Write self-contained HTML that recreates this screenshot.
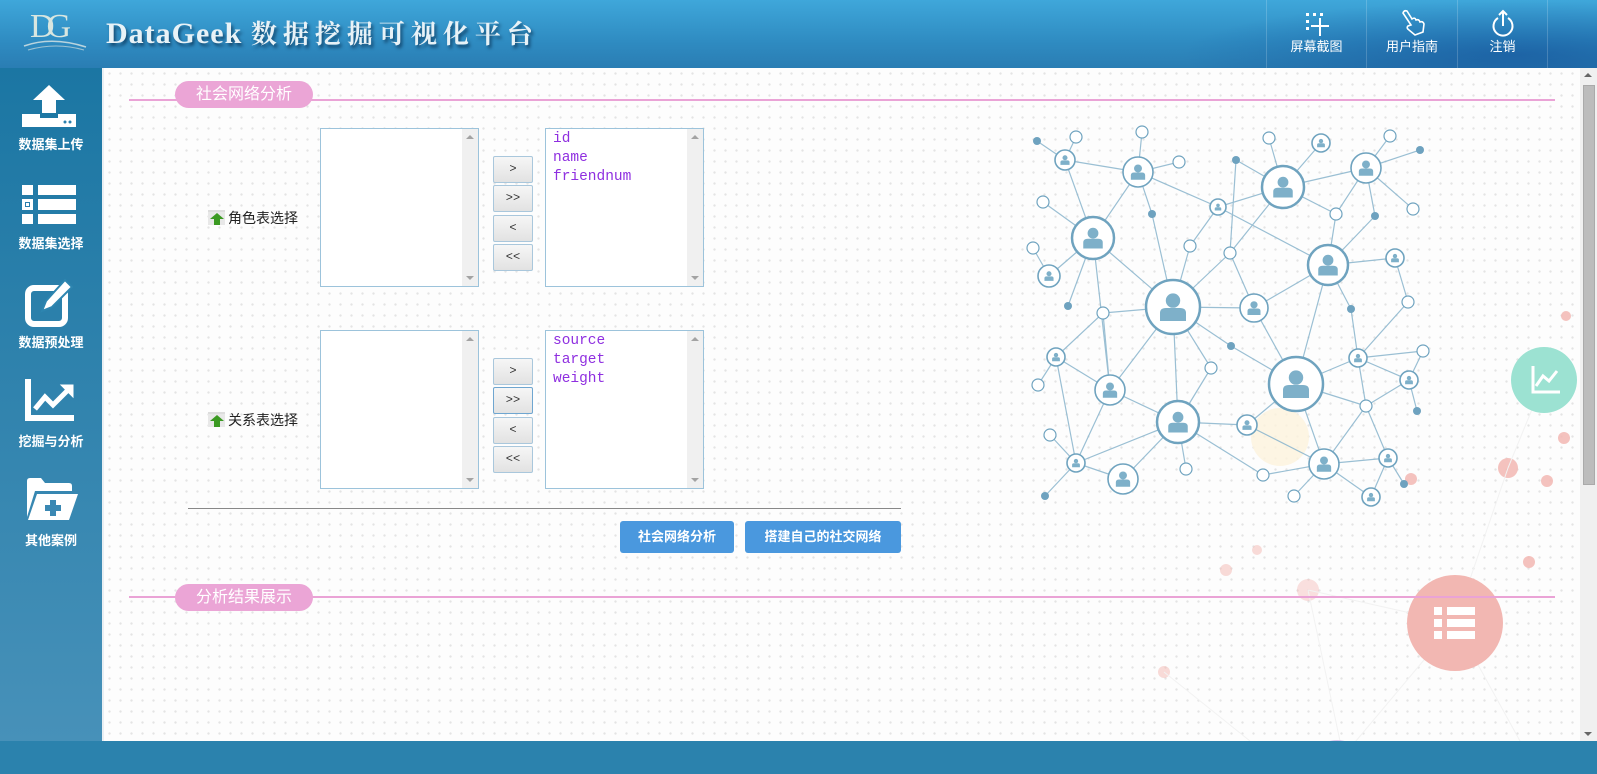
<!DOCTYPE html>
<html><head><meta charset="utf-8"><style>
*{margin:0;padding:0;box-sizing:border-box}
body{width:1597px;height:774px;overflow:hidden;position:relative;font-family:"Liberation Sans","Noto Sans CJK SC",sans-serif;background:#fff}
#hdr{position:absolute;left:0;top:0;width:1597px;height:68px;background:linear-gradient(180deg,#3fa7da 0%,#2f8cc2 60%,#2a7db3 100%)}
#hdr .rt{position:absolute;right:0;top:0;width:420px;height:68px;background:radial-gradient(ellipse at 80% 80%,rgba(10,60,140,.45),rgba(0,0,0,0) 70%)}
.title{position:absolute;left:106px;top:14px;font-family:"Liberation Serif","Noto Serif CJK SC",serif;font-weight:bold;font-size:30px;color:#e8f2f7;text-shadow:2px 3px 3px rgba(0,30,60,.6);letter-spacing:1px;white-space:nowrap}
.title span{letter-spacing:6px;font-size:26px}
.logo{position:absolute;left:30px;top:8px;font-family:"Liberation Serif",serif;font-size:34px;color:#d8e6e0;letter-spacing:-8px}
.nav{position:absolute;top:0;height:68px;border-left:1px solid rgba(255,255,255,.18);color:#fff;font-size:13px;text-align:center}
.nav div{position:absolute;bottom:13px;width:100%}
#side{position:absolute;left:0;top:68px;width:104px;height:673px;background:linear-gradient(180deg,#1b76a3,#4791b9);border-right:2px solid #e9eff3}
.si{position:absolute;left:0;width:102px;text-align:center;color:#fff;font-size:13px;font-weight:bold}
#main{position:absolute;left:104px;top:68px;width:1476px;height:673px;background-color:#fdfdfd;background-image:radial-gradient(circle,#e4e4e4 1px,transparent 1.4px);background-size:11px 11px}
#foot{position:absolute;left:0;top:741px;width:1597px;height:33px;background:#2b82ad}
#sb{position:absolute;left:1580px;top:68px;width:17px;height:673px;background:#f0f0f0}
.pill{position:absolute;height:27px;border-radius:14px;background:#eba5d6;color:#fff;font-size:16px;line-height:27px;padding:0 21px}
.hl{position:absolute;height:2px;background:#eaa3d6}
.lb{position:absolute;width:159px;height:159px;border:1px solid #9cc3db;background:#fff}
.lb .sc{position:absolute;right:0;top:0;width:16px;height:100%;background:#f0f0f0}
.lb .sc:before{content:"";position:absolute;left:4px;top:6px;border:4px solid transparent;border-bottom:4px solid #a3a3a3;border-top:0}
.lb .sc:after{content:"";position:absolute;left:4px;bottom:6px;border:4px solid transparent;border-top:4px solid #a3a3a3;border-bottom:0}
.lb pre{font-family:"Liberation Mono",monospace;color:#8f2fe0;font-size:14.5px;line-height:19px;padding:1px 7px}
.bt{position:absolute;left:493px;width:40px;height:27px;border:1px solid #a9c7dc;border-radius:2px;background:linear-gradient(#f6f6f6,#e2e2e2);font-family:"Liberation Mono",monospace;font-size:12px;color:#333;text-align:center;line-height:25px}
.lab{position:absolute;left:208px;font-size:14px;color:#222}
.lab i{display:inline-block;width:17px;height:15px;vertical-align:-2px;margin-right:3px;background:linear-gradient(#ddd 0 2px,transparent 2px),#e8e8e8;position:relative}
.lab i:after{content:"";position:absolute;left:2px;top:3px;width:0;height:0;border:7px solid transparent;border-bottom:6px solid #3b9a22;border-top:0}
.lab i:before{content:"";position:absolute;left:6px;top:8px;width:6px;height:7px;background:#3b9a22}
.btn{position:absolute;top:521px;height:32px;background:#4a98de;border-radius:3px;color:#fff;font-weight:bold;font-size:13px;line-height:32px;text-align:center}
</style></head><body>
<div id="hdr"><div class="rt"></div>
<div class="logo">DG</div>
<svg style="position:absolute;left:22px;top:38px" width="66" height="14"><path d="M2 8 Q30 -2 64 9" stroke="#b9d4de" stroke-width="1.5" fill="none"/><path d="M6 12 Q34 4 62 12" stroke="#9cc2d2" stroke-width="1" fill="none"/></svg>
<div class="title">DataGeek <span>数据挖掘可视化平台</span></div>
<div class="nav" style="left:1266px;width:100px"><svg style="position:absolute;left:37px;top:11px" width="30" height="26"><g fill="#fff"><rect x="2" y="2" width="3" height="3"/><rect x="9" y="2" width="3" height="3"/><rect x="16" y="2" width="3" height="3"/><rect x="2" y="9" width="3" height="3"/><rect x="2" y="16" width="3" height="3"/><rect x="15" y="7" width="2" height="18"/><rect x="7" y="14" width="18" height="2"/></g></svg><div>屏幕截图</div></div>
<div class="nav" style="left:1366px;width:91px"><svg style="position:absolute;left:32px;top:9px" width="28" height="28" fill="none" stroke="#fff" stroke-width="1.6"><path d="M4 4 L12 16 L9 17 Q7 19 10 21 L16 26 L24 23 L25 15 Q24 12 21 13 Q20 10 17 11 Q16 8 13 10 L8 2 Q5 1 4 4Z"/></svg><div>用户指南</div></div>
<div class="nav" style="left:1457px;width:90px"><svg style="position:absolute;left:31px;top:8px" width="28" height="30" fill="none" stroke="#fff" stroke-width="2"><path d="M9 10 A9.5 9.5 0 1 0 19 10"/><path d="M14 18 V3 M10 7 L14 3 L18 7"/></svg><div>注销</div></div>
<div class="nav" style="left:1547px;width:50px"></div>
</div>
<div id="side">
<svg style="position:absolute;left:22px;top:17px" width="56" height="44" fill="#fff"><path d="M27 0 L43 15 H34 V28 H20 V15 H11Z"/><path d="M0 29 H18 V33 H36 V29 H54 V42 H0Z"/><circle cx="43" cy="37" r="1.5" fill="#2a7fad"/><circle cx="48" cy="37" r="1.5" fill="#2a7fad"/></svg>
<div class="si" style="top:66px">数据集上传</div>
<svg style="position:absolute;left:22px;top:117px" width="56" height="40" fill="#fff"><rect x="0" y="0" width="11" height="10"/><rect x="16" y="0" width="38" height="10"/><rect x="0" y="14" width="11" height="11"/><rect x="3" y="17" width="5" height="5" fill="#2a7fad"/><rect x="4" y="18" width="3" height="3"/><rect x="16" y="14" width="38" height="11"/><rect x="0" y="29" width="11" height="10"/><rect x="16" y="29" width="38" height="10"/></svg>
<div class="si" style="top:165px">数据集选择</div>
<svg style="position:absolute;left:25px;top:210px" width="52" height="50"><rect x="3" y="10" width="37" height="36" rx="6" fill="none" stroke="#fff" stroke-width="6"/><path d="M40 2 L47 9 L27 29 L17 33 L21 23Z" fill="#fff" stroke="#2d85b0" stroke-width="2"/></svg>
<div class="si" style="top:264px">数据预处理</div>
<svg style="position:absolute;left:25px;top:311px" width="50" height="45" fill="none" stroke="#fff" stroke-width="6"><path d="M3 0 V39 H49"/><path d="M10 30 L20 18 L28 26 L44 10" stroke-width="5"/><path d="M36 6 H48 V18Z" fill="#fff" stroke-width="1"/></svg>
<div class="si" style="top:363px">挖掘与分析</div>
<svg style="position:absolute;left:25px;top:409px" width="54" height="44" fill="#fff"><path d="M2 4 Q2 1 5 1 H16 L20 6 H44 Q47 6 47 9 V14 H10 L2 40Z"/><path d="M12 17 H53 L44 43 H3Z"/><path d="M25 23 H31 V28 H36 V34 H31 V39 H25 V34 H20 V28 H25Z" fill="#3a88b3"/></svg>
<div class="si" style="top:462px">其他案例</div>
</div>
<div id="main"></div>
<svg style="position:absolute;left:0;top:0" width="1597" height="774">
<defs><symbol id="p" viewBox="-10 -10 20 20"><circle cx="0" cy="-3.2" r="3.6" fill="#7eb0c9"/><path d="M-6.5 7 V3 Q-6.5 0.5 -3.5 0.5 H3.5 Q6.5 0.5 6.5 3 V7Z" fill="#7eb0c9"/></symbol></defs>
<g fill="#f3b8b3" opacity=".85"><circle cx="1566" cy="316" r="5"/><circle cx="1564" cy="438" r="6"/><circle cx="1508" cy="468" r="10"/><circle cx="1547" cy="481" r="6"/><circle cx="1529" cy="562" r="6"/><circle cx="1257" cy="550" r="5" opacity=".6"/><circle cx="1226" cy="570" r="6" opacity=".6"/><circle cx="1308" cy="590" r="11" opacity=".5"/><circle cx="1164" cy="672" r="6" opacity=".6"/><circle cx="1411" cy="479" r="6"/></g>
<g stroke="#f2f2f2" stroke-width="1"><line x1="1455" y1="623" x2="1308" y2="590"/><line x1="1455" y1="623" x2="1508" y2="468"/><line x1="1455" y1="623" x2="1340" y2="760"/><line x1="1455" y1="623" x2="1520" y2="741"/><line x1="1308" y1="590" x2="1340" y2="741"/><line x1="1508" y1="468" x2="1544" y2="380"/><line x1="1164" y1="672" x2="1250" y2="741"/></g>
<circle cx="1280" cy="437" r="29" fill="#fdf3dc" opacity=".8"/>
<circle cx="1544" cy="380" r="33" fill="#9ce2d2"/>
<path d="M1533 366 V392 H1560 M1536 386 L1543 376 L1549 381 L1557 371" stroke="#fff" stroke-width="3" fill="none"/>
<circle cx="1455" cy="623" r="48" fill="#f2b7b2"/>
<g fill="#fff"><rect x="1434" y="607" width="8" height="8"/><rect x="1447" y="607" width="28" height="8"/><rect x="1434" y="619" width="8" height="8"/><rect x="1447" y="619" width="28" height="8"/><rect x="1434" y="631" width="8" height="8"/><rect x="1447" y="631" width="28" height="8"/></g>
<circle cx="1337" cy="770" r="30" fill="#d9c6ec"/>
<g stroke="#8fb8cf" stroke-width="1.2" opacity=".9">
<line x1="1093" y1="238" x2="1065" y2="160"/><line x1="1093" y1="238" x2="1138" y2="172"/><line x1="1093" y1="238" x2="1173" y2="307"/><line x1="1093" y1="238" x2="1110" y2="390"/><line x1="1093" y1="238" x2="1043" y2="202"/><line x1="1093" y1="238" x2="1068" y2="306"/><line x1="1093" y1="238" x2="1049" y2="276"/>
<line x1="1065" y1="160" x2="1037" y2="141"/><line x1="1065" y1="160" x2="1076" y2="137"/><line x1="1065" y1="160" x2="1138" y2="172"/>
<line x1="1138" y1="172" x2="1142" y2="132"/><line x1="1138" y1="172" x2="1179" y2="162"/><line x1="1138" y1="172" x2="1152" y2="214"/><line x1="1138" y1="172" x2="1218" y2="207"/>
<line x1="1173" y1="307" x2="1152" y2="214"/><line x1="1173" y1="307" x2="1103" y2="313"/><line x1="1173" y1="307" x2="1110" y2="390"/><line x1="1173" y1="307" x2="1190" y2="246"/><line x1="1173" y1="307" x2="1230" y2="253"/><line x1="1173" y1="307" x2="1254" y2="308"/><line x1="1173" y1="307" x2="1178" y2="422"/><line x1="1173" y1="307" x2="1231" y2="346"/><line x1="1173" y1="307" x2="1211" y2="368"/>
<line x1="1110" y1="390" x2="1056" y2="357"/><line x1="1110" y1="390" x2="1178" y2="422"/><line x1="1110" y1="390" x2="1103" y2="313"/><line x1="1110" y1="390" x2="1076" y2="463"/>
<line x1="1283" y1="187" x2="1218" y2="207"/><line x1="1283" y1="187" x2="1321" y2="143"/><line x1="1283" y1="187" x2="1366" y2="168"/><line x1="1283" y1="187" x2="1336" y2="214"/><line x1="1283" y1="187" x2="1236" y2="160"/><line x1="1283" y1="187" x2="1230" y2="253"/><line x1="1283" y1="187" x2="1269" y2="138"/>
<line x1="1366" y1="168" x2="1390" y2="136"/><line x1="1366" y1="168" x2="1336" y2="214"/><line x1="1366" y1="168" x2="1413" y2="209"/><line x1="1366" y1="168" x2="1375" y2="216"/><line x1="1366" y1="168" x2="1420" y2="150"/>
<line x1="1328" y1="265" x2="1336" y2="214"/><line x1="1328" y1="265" x2="1254" y2="308"/><line x1="1328" y1="265" x2="1375" y2="216"/><line x1="1328" y1="265" x2="1395" y2="258"/><line x1="1328" y1="265" x2="1351" y2="309"/><line x1="1328" y1="265" x2="1296" y2="384"/><line x1="1328" y1="265" x2="1218" y2="207"/>
<line x1="1296" y1="384" x2="1231" y2="346"/><line x1="1296" y1="384" x2="1247" y2="425"/><line x1="1296" y1="384" x2="1358" y2="358"/><line x1="1296" y1="384" x2="1366" y2="406"/><line x1="1296" y1="384" x2="1254" y2="308"/><line x1="1296" y1="384" x2="1324" y2="464"/>
<line x1="1358" y1="358" x2="1351" y2="309"/><line x1="1358" y1="358" x2="1408" y2="302"/><line x1="1358" y1="358" x2="1409" y2="380"/><line x1="1358" y1="358" x2="1423" y2="351"/><line x1="1358" y1="358" x2="1366" y2="406"/><line x1="1395" y1="258" x2="1408" y2="302"/>
<line x1="1409" y1="380" x2="1417" y2="411"/><line x1="1409" y1="380" x2="1423" y2="351"/><line x1="1409" y1="380" x2="1366" y2="406"/>
<line x1="1178" y1="422" x2="1247" y2="425"/><line x1="1178" y1="422" x2="1123" y2="479"/><line x1="1178" y1="422" x2="1076" y2="463"/><line x1="1178" y1="422" x2="1186" y2="469"/><line x1="1178" y1="422" x2="1263" y2="475"/><line x1="1211" y1="368" x2="1178" y2="422"/>
<line x1="1324" y1="464" x2="1247" y2="425"/><line x1="1324" y1="464" x2="1263" y2="475"/><line x1="1324" y1="464" x2="1366" y2="406"/><line x1="1324" y1="464" x2="1388" y2="458"/><line x1="1324" y1="464" x2="1371" y2="497"/><line x1="1324" y1="464" x2="1294" y2="496"/>
<line x1="1388" y1="458" x2="1404" y2="484"/><line x1="1388" y1="458" x2="1366" y2="406"/><line x1="1388" y1="458" x2="1371" y2="497"/>
<line x1="1076" y1="463" x2="1050" y2="435"/><line x1="1076" y1="463" x2="1045" y2="496"/><line x1="1076" y1="463" x2="1056" y2="357"/><line x1="1076" y1="463" x2="1123" y2="479"/>
<line x1="1049" y1="276" x2="1033" y2="248"/><line x1="1056" y1="357" x2="1038" y2="385"/><line x1="1056" y1="357" x2="1103" y2="313"/><line x1="1230" y1="253" x2="1254" y2="308"/><line x1="1190" y1="246" x2="1218" y2="207"/><line x1="1230" y1="253" x2="1236" y2="160"/>
</g>
<g fill="#6ea2bf"><circle cx="1037" cy="141" r="4"/><circle cx="1152" cy="214" r="4"/><circle cx="1068" cy="306" r="4"/><circle cx="1231" cy="346" r="4"/><circle cx="1375" cy="216" r="4"/><circle cx="1351" cy="309" r="4"/><circle cx="1236" cy="160" r="4"/><circle cx="1045" cy="496" r="4"/><circle cx="1404" cy="484" r="4"/><circle cx="1417" cy="411" r="4"/><circle cx="1420" cy="150" r="4"/></g>
<g fill="#fff" stroke="#6fa3bf">
<g stroke-width="2.5"><circle cx="1093" cy="238" r="21"/><circle cx="1173" cy="307" r="27"/><circle cx="1283" cy="187" r="21"/><circle cx="1328" cy="265" r="20"/><circle cx="1296" cy="384" r="27"/><circle cx="1178" cy="422" r="21"/></g>
<g stroke-width="1.6"><circle cx="1138" cy="172" r="15"/><circle cx="1366" cy="168" r="15"/><circle cx="1254" cy="308" r="14"/><circle cx="1110" cy="390" r="15"/><circle cx="1123" cy="479" r="15"/><circle cx="1324" cy="464" r="15"/><circle cx="1065" cy="160" r="10"/><circle cx="1049" cy="276" r="11"/><circle cx="1056" cy="357" r="9"/><circle cx="1076" cy="463" r="9"/><circle cx="1247" cy="425" r="10"/><circle cx="1395" cy="258" r="9"/><circle cx="1358" cy="358" r="9"/><circle cx="1409" cy="380" r="9"/><circle cx="1388" cy="458" r="9"/><circle cx="1371" cy="497" r="9"/><circle cx="1321" cy="143" r="9"/><circle cx="1218" cy="207" r="8"/></g>
<g stroke-width="1.2"><circle cx="1076" cy="137" r="6"/><circle cx="1142" cy="132" r="6"/><circle cx="1179" cy="162" r="6"/><circle cx="1043" cy="202" r="6"/><circle cx="1033" cy="248" r="6"/><circle cx="1190" cy="246" r="6"/><circle cx="1230" cy="253" r="6"/><circle cx="1103" cy="313" r="6"/><circle cx="1211" cy="368" r="6"/><circle cx="1336" cy="214" r="6"/><circle cx="1366" cy="406" r="6"/><circle cx="1408" cy="302" r="6"/><circle cx="1413" cy="209" r="6"/><circle cx="1269" cy="138" r="6"/><circle cx="1390" cy="136" r="6"/><circle cx="1038" cy="385" r="6"/><circle cx="1050" cy="435" r="6"/><circle cx="1186" cy="469" r="6"/><circle cx="1263" cy="475" r="6"/><circle cx="1294" cy="496" r="6"/><circle cx="1423" cy="351" r="6"/></g>
</g>
<g>
<use href="#p" x="1078" y="223" width="30" height="30"/><use href="#p" x="1153" y="287" width="40" height="40"/><use href="#p" x="1268" y="172" width="30" height="30"/><use href="#p" x="1313" y="250" width="30" height="30"/><use href="#p" x="1276" y="364" width="40" height="40"/><use href="#p" x="1163" y="407" width="30" height="30"/>
<use href="#p" x="1127" y="161" width="22" height="22"/><use href="#p" x="1355" y="157" width="22" height="22"/><use href="#p" x="1244" y="298" width="20" height="20"/><use href="#p" x="1099" y="379" width="22" height="22"/><use href="#p" x="1112" y="468" width="22" height="22"/><use href="#p" x="1313" y="453" width="22" height="22"/>
<use href="#p" x="1058" y="153" width="14" height="14"/><use href="#p" x="1042" y="269" width="14" height="14"/><use href="#p" x="1050" y="351" width="12" height="12"/><use href="#p" x="1070" y="457" width="12" height="12"/><use href="#p" x="1240" y="418" width="14" height="14"/><use href="#p" x="1389" y="252" width="12" height="12"/><use href="#p" x="1352" y="352" width="12" height="12"/><use href="#p" x="1403" y="374" width="12" height="12"/><use href="#p" x="1382" y="452" width="12" height="12"/><use href="#p" x="1365" y="491" width="12" height="12"/><use href="#p" x="1315" y="137" width="12" height="12"/><use href="#p" x="1213" y="202" width="10" height="10"/>
</g>
</svg>
<div class="hl" style="left:129px;top:99px;width:1426px"></div>
<div class="pill" style="left:175px;top:81px">社会网络分析</div>
<div class="lab" style="top:208px"><i></i>角色表选择</div>
<div class="lb" style="left:320px;top:128px"><div class="sc"></div></div>
<div class="bt" style="top:156px">&gt;</div><div class="bt" style="top:185px">&gt;&gt;</div><div class="bt" style="top:215px">&lt;</div><div class="bt" style="top:244px">&lt;&lt;</div>
<div class="lb" style="left:545px;top:128px"><pre>id
name
friendnum</pre><div class="sc"></div></div>
<div class="lab" style="top:410px"><i></i>关系表选择</div>
<div class="lb" style="left:320px;top:330px"><div class="sc"></div></div>
<div class="bt" style="top:358px">&gt;</div><div class="bt" style="top:387px;border-color:#6fa6d0">&gt;&gt;</div><div class="bt" style="top:417px">&lt;</div><div class="bt" style="top:446px">&lt;&lt;</div>
<div class="lb" style="left:545px;top:330px"><pre>source
target
weight</pre><div class="sc"></div></div>
<div style="position:absolute;left:188px;top:508px;width:713px;height:1px;background:#888"></div>
<div class="btn" style="left:620px;width:114px">社会网络分析</div>
<div class="btn" style="left:745px;width:156px">搭建自己的社交网络</div>
<div class="hl" style="left:129px;top:596px;width:1426px"></div>
<div class="pill" style="left:175px;top:584px">分析结果展示</div>
<div id="sb"><div style="position:absolute;left:3px;top:17px;width:12px;height:400px;background:#bcbcbc;border:1px solid #aaa"></div>
<div style="position:absolute;left:4px;top:5px;border:4px solid transparent;border-bottom:4px solid #666;border-top:0"></div>
<div style="position:absolute;left:4px;bottom:5px;border:4px solid transparent;border-top:4px solid #666;border-bottom:0"></div></div>
<div id="foot"></div>
</body></html>
